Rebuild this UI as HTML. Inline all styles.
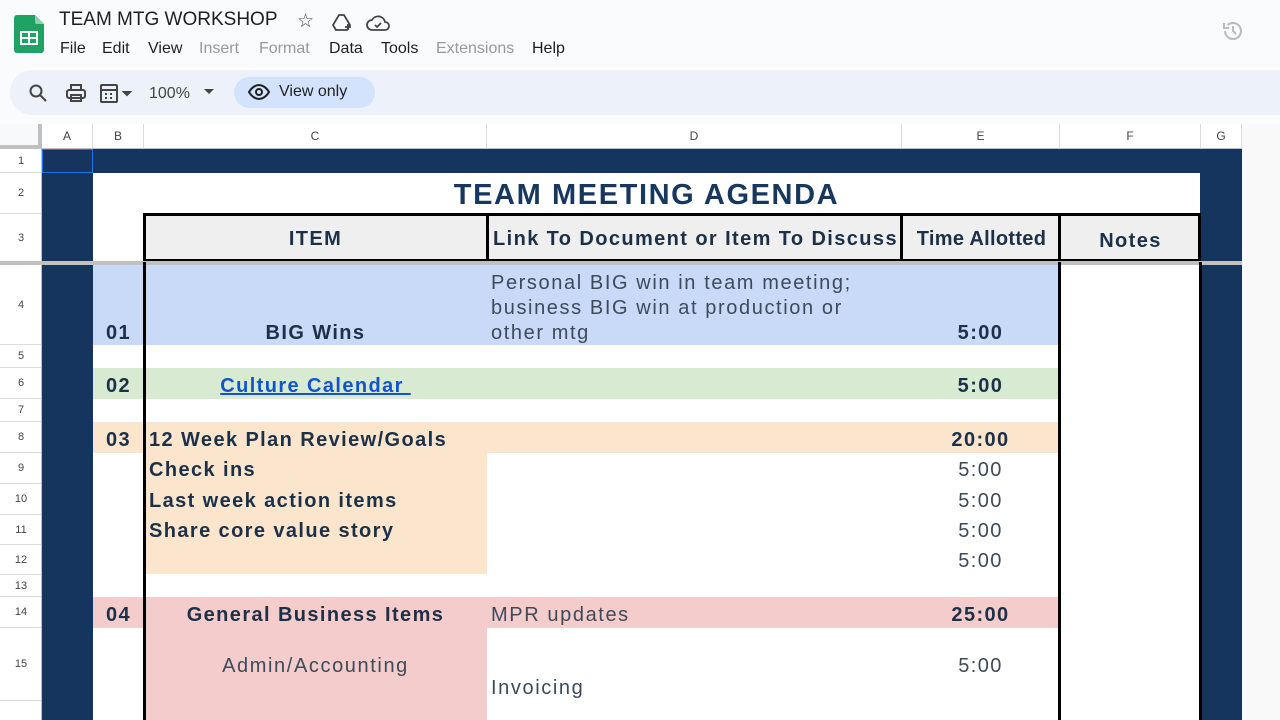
<!DOCTYPE html>
<html><head><meta charset="utf-8"><style>
*{margin:0;padding:0;box-sizing:border-box}
body{width:1280px;height:720px;overflow:hidden;background:#f9fbfd;font-family:"Liberation Sans",sans-serif;position:relative}
.a{position:absolute}
.t{position:absolute;white-space:nowrap;color:#1c3048;letter-spacing:1.4px}
.b{font-weight:bold}
.hd{position:absolute;top:124px;height:25px;font-size:12px;color:#444;text-align:center;line-height:25px;border-right:1px solid #dadce0;background:#fff;border-bottom:1px solid #c0c0c0}
.rn{position:absolute;left:0;width:42px;font-size:11px;color:#444;text-align:center;border-bottom:1px solid #dadce0;background:#fff;display:flex;align-items:center;justify-content:center}
.m{position:absolute;top:40px;font-size:16px;color:#1f1f1f;white-space:nowrap}
.g{color:#999}
</style></head><body>
<svg class="a" style="left:14px;top:15px" width="30" height="38" viewBox="0 0 30 38"><path d="M3 0h18l9 9v26a3 3 0 0 1-3 3H3a3 3 0 0 1-3-3V3a3 3 0 0 1 3-3z" fill="#1ea362"/><path d="M21 0l9 9h-7a2 2 0 0 1-2-2z" fill="#8ed1b1"/><rect x="7" y="17" width="16" height="12" fill="none" stroke="#fff" stroke-width="2"/><line x1="7" y1="23" x2="23" y2="23" stroke="#fff" stroke-width="2"/><line x1="15" y1="17" x2="15" y2="29" stroke="#fff" stroke-width="2"/></svg>
<div class="t" style="left:59px;top:9px;font-size:19px;color:#1f1f1f;letter-spacing:0">TEAM MTG WORKSHOP</div>
<div class="t" style="left:297px;top:10px;font-size:19px;color:#444;letter-spacing:0">☆</div>
<svg class="a" style="left:331px;top:12px" width="22" height="22" viewBox="0 0 22 22" fill="none" stroke="#444" stroke-width="1.8"><path d="M8 3h5l6 10-3 5H5l-3-5z"/><path d="M14 15h6M17 12v6"/></svg>
<svg class="a" style="left:366px;top:13px" width="24" height="20" viewBox="0 0 24 20" fill="none" stroke="#444" stroke-width="1.8"><path d="M6 17a5 5 0 0 1 0-10 7 7 0 0 1 13 2 4 4 0 0 1 0 8z"/><path d="M9 12l2 2 4-4"/></svg>
<div class="m" style="left:60px">File</div>
<div class="m" style="left:102px">Edit</div>
<div class="m" style="left:148px">View</div>
<div class="m g" style="left:199px">Insert</div>
<div class="m g" style="left:259px">Format</div>
<div class="m" style="left:329px">Data</div>
<div class="m" style="left:381px">Tools</div>
<div class="m g" style="left:436px">Extensions</div>
<div class="m" style="left:532px">Help</div>
<svg class="a" style="left:1221px;top:19px" width="24" height="24" viewBox="0 0 24 24" fill="none" stroke="#bbb" stroke-width="2"><path d="M4 12a8 8 0 1 0 2.5-5.8"/><path d="M3 4v5h5"/><path d="M12 7v5l3 3"/></svg>
<div class="a" style="left:10px;top:70px;width:1290px;height:45px;background:#edf2fa;border-radius:23px"></div>
<svg class="a" style="left:28px;top:83px" width="20" height="20" viewBox="0 0 20 20" fill="none" stroke="#444" stroke-width="2"><circle cx="8" cy="8" r="5.5"/><path d="M12 12l6 6"/></svg>
<svg class="a" style="left:65px;top:82px" width="22" height="22" viewBox="0 0 22 22" fill="none" stroke="#444" stroke-width="2"><rect x="6" y="3" width="10" height="5"/><rect x="2" y="8" width="18" height="8" rx="2"/><rect x="6" y="13" width="10" height="6"/></svg>
<svg class="a" style="left:99px;top:82px" width="38" height="22" viewBox="0 0 38 22" fill="none" stroke="#444" stroke-width="2"><rect x="2" y="3" width="16" height="17" rx="1"/><path d="M2 8h16M6 12h2M11 12h2M6 16h2M11 16h2"/><path d="M25 10l3 3 3-3z" fill="#444"/></svg>
<div class="t" style="left:149px;top:85px;font-size:16px;color:#444;letter-spacing:0">100%</div>
<svg class="a" style="left:203px;top:88px" width="12" height="8"><path d="M1 1l5 5 5-5z" fill="#444"/></svg>
<div class="a" style="left:234px;top:77px;width:141px;height:31px;background:#d3e3fd;border-radius:16px"></div>
<svg class="a" style="left:247px;top:83px" width="24" height="18" viewBox="0 0 24 18" fill="none" stroke="#1f1f1f" stroke-width="2"><path d="M2 9c3-5 7-7 10-7s7 2 10 7c-3 5-7 7-10 7S5 14 2 9z"/><circle cx="12" cy="9" r="3"/></svg>
<div class="t" style="left:279px;top:83px;font-size:16px;color:#1f1f1f;letter-spacing:0">View only</div>

<div class="a" style="left:0;top:124px;width:1280px;height:596px;background:#fff"></div>
<div class="a" style="left:1242px;top:124px;width:38px;height:596px;background:#f8f9f8"></div>
<div class="a" style="left:0;top:124px;width:42px;height:25px;background:#f8f9fa;border-right:4px solid #c0c0c0;border-bottom:4px solid #c0c0c0"></div>
<div class="hd" style="left:42px;width:51px">A</div>
<div class="hd" style="left:93px;width:51px">B</div>
<div class="hd" style="left:144px;width:343px">C</div>
<div class="hd" style="left:487px;width:415px">D</div>
<div class="hd" style="left:902px;width:158px">E</div>
<div class="hd" style="left:1060px;width:141px">F</div>
<div class="hd" style="left:1201px;width:41px">G</div>

<div class="rn" style="top:149px;height:24px">1</div>
<div class="rn" style="top:173px;height:41px">2</div>
<div class="rn" style="top:214px;height:48px">3</div>
<div class="rn" style="top:265px;height:80px">4</div>
<div class="rn" style="top:345px;height:23px">5</div>
<div class="rn" style="top:368px;height:31px">6</div>
<div class="rn" style="top:399px;height:23px">7</div>
<div class="rn" style="top:422px;height:31px">8</div>
<div class="rn" style="top:453px;height:31px">9</div>
<div class="rn" style="top:484px;height:31px">10</div>
<div class="rn" style="top:515px;height:30px">11</div>
<div class="rn" style="top:545px;height:30px">12</div>
<div class="rn" style="top:575px;height:22px">13</div>
<div class="rn" style="top:597px;height:31px">14</div>
<div class="rn" style="top:628px;height:73px">15</div>
<div class="rn" style="top:701px;height:19px;border:none"></div>
<div class="a" style="left:41px;top:149px;width:1px;height:571px;background:#c0c0c0"></div>

<div class="a" style="left:42px;top:149px;width:1200px;height:24px;background:#15355e"></div>
<div class="a" style="left:42px;top:149px;width:51px;height:571px;background:#15355e"></div>
<div class="a" style="left:1200px;top:149px;width:42px;height:571px;background:#15355e"></div>
<div class="a" style="left:42px;top:149px;width:51px;height:24px;border:1px solid #1a73e8"></div>

<div class="t b" style="left:93px;top:179px;width:1107px;text-align:center;font-size:29px;color:#17375e;letter-spacing:1.6px">TEAM MEETING AGENDA</div>

<div class="a" style="left:143px;top:213px;width:1058px;height:49px;background:#efefef;border:3px solid #000"></div>
<div class="a" style="left:486px;top:213px;width:3px;height:49px;background:#000"></div>
<div class="a" style="left:900px;top:213px;width:3px;height:49px;background:#000"></div>
<div class="a" style="left:1058px;top:213px;width:3px;height:49px;background:#000"></div>
<div class="t b" style="left:144px;top:228px;width:343px;text-align:center;font-size:20px">ITEM</div>
<div class="t b" style="left:493px;top:228px;font-size:20px">Link To Document or Item To Discuss</div>
<div class="t b" style="left:903px;top:228px;width:157px;text-align:center;font-size:20px;letter-spacing:0.3px">Time Allotted</div>
<div class="t b" style="left:1060px;top:230px;width:141px;text-align:center;font-size:20px">Notes</div>
<div class="a" style="left:0;top:261px;width:1242px;height:4px;background:#c0c0c0"></div>

<div class="a" style="left:93px;top:265px;width:966px;height:80px;background:#c9daf8"></div>
<div class="a" style="left:93px;top:368px;width:966px;height:31px;background:#d9ead3"></div>
<div class="a" style="left:93px;top:422px;width:966px;height:31px;background:#fce5cd"></div>
<div class="a" style="left:144px;top:453px;width:343px;height:121px;background:#fce5cd"></div>
<div class="a" style="left:93px;top:597px;width:966px;height:31px;background:#f4cccc"></div>
<div class="a" style="left:144px;top:628px;width:343px;height:92px;background:#f4cccc"></div>
<div class="a" style="left:143px;top:262px;width:3px;height:458px;background:#000"></div>
<div class="a" style="left:1058px;top:262px;width:3px;height:458px;background:#000"></div>
<div class="a" style="left:1199px;top:262px;width:3px;height:458px;background:#000"></div>

<div class="t b" style="left:93px;top:322px;width:51px;text-align:center;font-size:20px">01</div>
<div class="t b" style="left:144px;top:322px;width:343px;text-align:center;font-size:20px">BIG Wins</div>
<div class="t" style="left:491px;top:271px;font-size:20px;line-height:25px;color:#3d4a5a;letter-spacing:1.6px">Personal BIG win in team meeting;<br>business BIG win at production or<br>other mtg</div>
<div class="t b" style="left:902px;top:322px;width:157px;text-align:center;font-size:20px">5:00</div>

<div class="t b" style="left:93px;top:375px;width:51px;text-align:center;font-size:20px">02</div>
<div class="t b" style="left:144px;top:375px;width:343px;text-align:center;font-size:20px;color:#1155cc;text-decoration:underline">Culture Calendar&nbsp;</div>
<div class="t b" style="left:902px;top:375px;width:157px;text-align:center;font-size:20px">5:00</div>

<div class="t b" style="left:93px;top:429px;width:51px;text-align:center;font-size:20px">03</div>
<div class="t b" style="left:149px;top:429px;font-size:20px">12 Week Plan Review/Goals</div>
<div class="t b" style="left:902px;top:429px;width:157px;text-align:center;font-size:20px">20:00</div>
<div class="t b" style="left:149px;top:459px;font-size:20px">Check ins</div>
<div class="t b" style="left:149px;top:490px;font-size:20px">Last week action items</div>
<div class="t b" style="left:149px;top:520px;font-size:20px">Share core value story</div>
<div class="t" style="left:902px;top:459px;width:157px;text-align:center;font-size:20px;color:#3d4a5a">5:00</div>
<div class="t" style="left:902px;top:490px;width:157px;text-align:center;font-size:20px;color:#3d4a5a">5:00</div>
<div class="t" style="left:902px;top:520px;width:157px;text-align:center;font-size:20px;color:#3d4a5a">5:00</div>
<div class="t" style="left:902px;top:550px;width:157px;text-align:center;font-size:20px;color:#3d4a5a">5:00</div>

<div class="t b" style="left:93px;top:604px;width:51px;text-align:center;font-size:20px">04</div>
<div class="t b" style="left:144px;top:604px;width:343px;text-align:center;font-size:20px">General Business Items</div>
<div class="t" style="left:491px;top:604px;font-size:20px;color:#3d4a5a;letter-spacing:1.6px">MPR updates</div>
<div class="t b" style="left:902px;top:604px;width:157px;text-align:center;font-size:20px">25:00</div>
<div class="t" style="left:144px;top:655px;width:343px;text-align:center;font-size:20px;color:#3d4a5a;letter-spacing:1.6px">Admin/Accounting</div>
<div class="t" style="left:902px;top:655px;width:157px;text-align:center;font-size:20px;color:#3d4a5a">5:00</div>
<div class="t" style="left:491px;top:677px;font-size:20px;color:#3d4a5a;letter-spacing:1.6px">Invoicing</div>
</body></html>
